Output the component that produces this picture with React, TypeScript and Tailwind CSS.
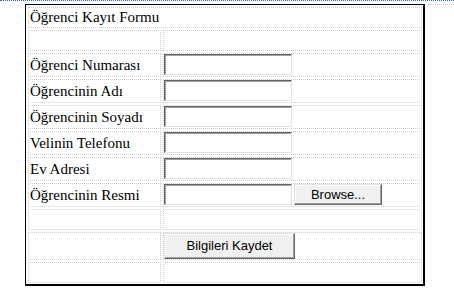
import React from 'react';

const labels = [
  'Öğrenci Numarası',
  'Öğrencinin Adı',
  'Öğrencinin Soyadı',
  'Velinin Telefonu',
  'Ev Adresi',
  'Öğrencinin Resmi',
];

const cell = 'border border-dotted border-[#cdcdcd]';
const serif = "font-['Liberation_Serif',serif] text-[15px] text-black";
const sans = "font-['Liberation_Sans',Arial,sans-serif] text-[13px] text-black";

const TextBox: React.FC = () => (
  <input
    type="text"
    readOnly
    className="w-[128px] h-[21px] bg-white border-t border-l border-r border-b border-t-[#646464] border-l-[#646464] border-r-[#e3e3e3] border-b-[#e3e3e3] shadow-[inset_1px_1px_0_#a0a0a0] outline-none"
  />
);

const WinButton: React.FC<{ label: string; className: string }> = ({ label, className }) => (
  <button
    type="button"
    className={`${className} ${sans} flex items-center justify-center bg-[#f0f0f0] border border-t-[#e3e3e3] border-l-[#e3e3e3] border-r-[#696969] border-b-[#696969] shadow-[inset_-1px_-1px_0_#a0a0a0,inset_1px_1px_0_#ffffff]`}
  >
    {label}
  </button>
);

export default function App() {
  return (
    <div className="w-[454px] h-[298px] bg-white overflow-hidden">
      <div className="h-px border-t border-dotted border-[#3165c8]" />
      <div className="flex mt-[3px]">
        <div className="ml-[25px] w-[400px] border-t border-l border-r-2 border-b-2 border-black pt-[2px] pl-[2px] pr-[1px] pb-[1px]">
          <div className="grid grid-cols-[133px_259px] grid-rows-[21px_21px_24px_24px_24px_24px_24px_24px_21px_28px_21px] gap-[2px]">
            <div className={`${cell} col-span-2 flex items-center pl-[1px] ${serif}`}>
              Öğrenci Kayıt Formu
            </div>
            <div className={cell} />
            <div className={cell} />
            {labels.map((label, i) => (
              <React.Fragment key={label}>
                <div className={`${cell} flex items-center pl-[1px] ${serif}`}>{label}</div>
                <div className={`${cell} flex items-start`}>
                  <TextBox />
                  {i === labels.length - 1 && (
                    <WinButton label="Browse..." className="ml-[2px] w-[88px] h-[21px]" />
                  )}
                </div>
              </React.Fragment>
            ))}
            <div className={cell} />
            <div className={cell} />
            <div className={cell} />
            <div className={`${cell} flex items-start`}>
              <WinButton label="Bilgileri Kaydet" className="w-[131px] h-[26px]" />
            </div>
            <div className={cell} />
            <div className={cell} />
          </div>
        </div>
        <div className="flex-1 ml-[3px] border-t border-dotted border-[#cdcdcd]" />
      </div>
    </div>
  );
}
